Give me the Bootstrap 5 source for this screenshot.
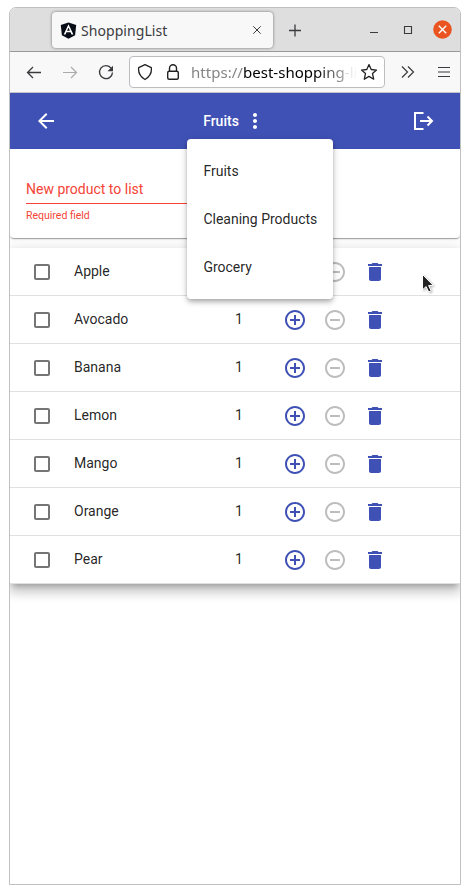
<!DOCTYPE html>
<html lang="en">
<head>
<meta charset="utf-8">
<meta name="viewport" content="width=device-width, initial-scale=1">
<title>ShoppingList</title>
<link href="https://cdn.jsdelivr.net/npm/bootstrap@5.3.0/dist/css/bootstrap.min.css" rel="stylesheet">
<style>
body{background:#fff;font-family:Roboto,sans-serif;font-size:14px;line-height:20px;color:rgba(0,0,0,.87);overflow:hidden}
svg{display:block;flex:none}
.window{width:452px;height:878px;margin:7px 0 0 9px;border:1px solid #c0c0c2;border-radius:7px 7px 0 0;overflow:hidden}
.titlebar{height:44px;background:#dedede;border-bottom:1px solid #999;padding:4px 8px 0 42px;color:#3b3b3f}
.tab{width:221px;height:36px;background:#f8f8f8;border-radius:4px;box-shadow:0 0 3px rgba(0,0,0,.5);padding:0 10px 0 8px;font-family:"Noto Sans",sans-serif}
.tab-name{font-size:14px;letter-spacing:.06px;margin-left:4px;padding-top:1px}
.toolbar{height:41px;background:#f8f8f8;border-bottom:1px solid #c4c4c8;padding:0 9px 0 12px;color:#3b3b3f}
.address{width:256px;height:32px;margin-left:11px;background:#fff;border:1px solid #bdbdc1;border-radius:4px;padding:0 7px;font-family:"Noto Sans",sans-serif;font-size:15px}
.url{width:165px;margin-left:11px;letter-spacing:.03px;color:#858585;white-space:nowrap;-webkit-mask-image:linear-gradient(90deg,#000 125px,transparent 168px)}
.url b{font-weight:400;color:#000}
.appbar{height:56px;background:#3f51b5;color:#fff;padding:0 24px;font-weight:500}
.list-menu{left:177px;top:46px;width:146px;height:160px;background:#fff;border-radius:4px;padding:8px 0;z-index:5;box-shadow:0 2px 4px -1px rgba(0,0,0,.2),0 4px 5px rgba(0,0,0,.14),0 1px 10px rgba(0,0,0,.12)}
.list-menu a{height:48px;padding:0 16.4px;color:rgba(0,0,0,.87);text-decoration:none;white-space:nowrap}
.entry{height:89px;border-radius:0 0 4px 4px;padding:30px 16px 0;background:#fff;box-shadow:0 2px 1px -1px rgba(0,0,0,.2),0 1px 1px rgba(0,0,0,.14),0 1px 3px rgba(0,0,0,.12);color:#f44336}
.entry-line{width:180px;border-bottom:1px solid #f44336;height:25px}
.entry-error{font-size:10.5px;line-height:12px;margin-top:6px}
.products{margin-top:10px;background:#fff;box-shadow:0 5px 5px -3px rgba(0,0,0,.2),0 8px 10px 1px rgba(0,0,0,.14),0 3px 14px 2px rgba(0,0,0,.12)}
.product{height:48px;border-bottom:1px solid #e0e0e0;padding-left:24px}
.tick{width:16px;height:16px;border:2px solid #757575;border-radius:2px;margin-top:1px}
.product-name{width:161px;margin-left:24px;padding-bottom:1px}
.qty{width:40px;padding-bottom:1px}
.actions{gap:16px;color:#3f51b5;padding-top:1px}
.off{color:#bdbdbd}
.pointer{left:411px;top:180px;z-index:6;filter:drop-shadow(1px 1px 1px rgba(0,0,0,.3))}
</style>
<script src="https://cdn.jsdelivr.net/npm/bootstrap@5.3.0/dist/js/bootstrap.bundle.min.js"></script>
</head>
<body>
<svg class="d-none" aria-hidden="true">
<symbol id="plus" viewBox="0 0 24 24"><path fill="currentColor" d="M13 7h-2v4H7v2h4v4h2v-4h4v-2h-4V7zm-1-5C6.480 2 2 6.480 2 12s4.480 10 10 10 10-4.480 10-10S17.520 2 12 2zm0 18c-4.410 0-8-3.590-8-8s3.590-8 8-8 8 3.590 8 8-3.590 8-8 8z"/></symbol>
<symbol id="minus" viewBox="0 0 24 24"><path fill="currentColor" d="M7 11v2h10v-2H7zm5-9C6.480 2 2 6.480 2 12s4.480 10 10 10 10-4.480 10-10S17.520 2 12 2zm0 18c-4.410 0-8-3.590-8-8s3.590-8 8-8 8 3.590 8 8-3.590 8-8 8z"/></symbol>
<symbol id="trash" viewBox="0 0 24 24"><path fill="currentColor" d="M6 19c0 1.100.9 2 2 2h8c1.100 0 2-.9 2-2V7H6v12zM19 4h-3.500l-1-1h-5l-1 1H5v2h14V4z"/></symbol>
</svg>
<div class="window">
  <header class="titlebar d-flex">
    <div class="tab d-flex align-items-center">
      <svg width="17" height="17" viewBox="0 0 17 17"><path fill="#080c16" d="M8.500.4l7.700 2.700-1.100 10.100-6.600 3.600-6.600-3.600L.8 3.100z"/><path fill="#fff" fill-rule="evenodd" d="M8.500 2.300l4.900 10.300h-1.900l-1-2.400h-4l-1 2.400H3.700zM8.500 5.500L7.100 8.800h2.800z"/></svg>
      <span class="tab-name">ShoppingList</span>
      <svg class="ms-auto" width="12" height="12" viewBox="0 0 12 12" fill="none" stroke="currentColor" stroke-width="1"><path d="M2.300 2.300l7.400 7.400M9.700 2.300l-7.400 7.400"/></svg>
    </div>
    <div class="d-flex align-items-center flex-fill pb-1">
      <svg width="14" height="14" viewBox="0 0 14 14" style="margin-left:15px" fill="none" stroke="currentColor" stroke-width="1.300"><path d="M1 7.500h12M7 1.500v12"/></svg>
      <svg class="ms-auto" width="10" height="14" viewBox="0 0 10 14" fill="none" stroke="currentColor" stroke-width="1.100"><path d="M1 9.500h8"/></svg>
      <svg width="10" height="10" viewBox="0 0 10 10" style="margin-left:24px" fill="none" stroke="currentColor" stroke-width="1.100"><path d="M1.500 1.500h7v7h-7z"/></svg>
      <svg width="19" height="19" viewBox="0 0 19 19" style="margin-left:20px"><circle cx="9.500" cy="9.500" r="9.300" fill="#e95420"/><path d="M5.800 5.800l7.400 7.400M13.200 5.800l-7.400 7.400" stroke="#fff" stroke-width="1.400"/></svg>
    </div>
  </header>
  <nav class="toolbar d-flex align-items-center">
    <svg width="24" height="24" viewBox="0 0 24 24" fill="none" stroke="currentColor" stroke-width="1.300"><path d="M19 12.500H5.500M11 7l-5.500 5.500L11 18"/></svg>
    <svg style="margin-left:12px" width="24" height="24" viewBox="0 0 24 24" fill="none" stroke="#aaa" stroke-width="1.200"><path d="M5 12.500h13.500M13 7l5.500 5.500L13 18"/></svg>
    <svg style="margin-left:12px" width="24" height="24" viewBox="0 0 24 24" fill="none" stroke="currentColor" stroke-width="1.400"><path d="M17.300 8.300A6.500 6.500 0 1 0 18.500 12.500"/><path fill="currentColor" stroke="none" d="M19 5.800v5.500h-5.500z"/></svg>
    <div class="address d-flex align-items-center">
      <svg width="16" height="18" viewBox="0 0 16 18" fill="none" stroke="#222" stroke-width="1.300" stroke-linejoin="round"><path d="M8 1.600l6.300 3c.6 4.400-1.500 9-6.300 11.900C3.200 13.600 1.100 9 1.700 4.600z"/></svg>
      <svg style="margin-left:13px" width="14" height="18" viewBox="0 0 14 18" fill="none" stroke="#222" stroke-width="1.400"><rect x="1.700" y="8.300" width="10.600" height="8" rx="1.500"/><path d="M3.500 8V5.200a3.500 3.500 0 0 1 7 0V8"/></svg>
      <span class="url">https://<b>best-shopping</b>-li</span>
      <svg style="margin-left:4px" width="18" height="18" viewBox="0 0 18 18" fill="none" stroke="#222" stroke-width="1.300" stroke-linejoin="round"><path d="M9 1.600l2.200 4.900 5.300.6-4 3.500 1.200 5.600L9 13.400l-4.700 2.800 1.200-5.600-4-3.500 5.300-.6z"/></svg>
    </div>
    <svg style="margin-left:15px" width="16" height="16" viewBox="0 0 16 16" fill="none" stroke="currentColor" stroke-width="1.200"><path d="M2 2.500L7.500 8 2 13.500M8 2.500L13.500 8 8 13.500"/></svg>
    <svg class="ms-auto" width="14" height="16" viewBox="0 0 14 16" fill="none" stroke="currentColor" stroke-width="1.200"><path d="M1 3.500h12M1 8h12M1 12.500h12"/></svg>
  </nav>
  <main class="position-relative">
    <div class="appbar d-flex align-items-center justify-content-between">
      <svg width="24" height="24" viewBox="0 0 24 24"><path fill="#fff" d="M20 11H7.830l5.590-5.590L12 4l-8 8 8 8 1.410-1.410L7.830 13H20v-2z"/></svg>
      <div class="d-flex align-items-center"><span>Fruits</span>
        <svg class="ms-1" width="24" height="24" viewBox="0 0 24 24"><path fill="#fff" d="M12 8c1.100 0 2-.9 2-2s-.9-2-2-2-2 .9-2 2 .9 2 2 2zm0 2c-1.100 0-2 .9-2 2s.9 2 2 2 2-.9 2-2-.9-2-2-2zm0 6c-1.100 0-2 .9-2 2s.9 2 2 2 2-.9 2-2-.9-2-2-2z"/></svg>
      </div>
      <svg width="24" height="24" viewBox="0 0 24 24" fill="none" stroke="#fff" stroke-width="2"><path d="M11.500 4H3v16h8.500M8 12H20M15.500 7.500l4.500 4.500-4.500 4.500"/></svg>
    </div>
    <div class="list-menu position-absolute d-flex flex-column">
      <a class="d-flex align-items-center" href="#">Fruits</a>
      <a class="d-flex align-items-center" href="#">Cleaning Products</a>
      <a class="d-flex align-items-center" href="#">Grocery</a>
    </div>
    <section class="entry">
      <div class="entry-line">New product to list</div>
      <div class="entry-error">Required field</div>
    </section>
    <section class="products" id="products"></section>
    <svg class="pointer position-absolute" width="14" height="22" viewBox="0 0 14 22"><path fill="#222" stroke="#fff" stroke-width="1" d="M1.500 1.500v15.300l3.600-3.200 2.600 5.400 2.500-1.200-2.600-5.200 4.600-.3z"/></svg>
  </main>
</div>
<script>
document.getElementById('products').innerHTML = ['Apple','Avocado','Banana','Lemon','Mango','Orange','Pear'].map((name, i) => `
<div class="product d-flex align-items-center">
  <span class="tick"></span><span class="product-name">${name}</span><span class="qty">${i ? 1 : ''}</span>
  <div class="actions d-flex ms-2">
    <svg width="24" height="24"><use href="#plus"/></svg>
    <svg class="off" width="24" height="24"><use href="#minus"/></svg>
    <svg width="24" height="24"><use href="#trash"/></svg>
  </div>
</div>`).join('');
</script>
</body>
</html>
